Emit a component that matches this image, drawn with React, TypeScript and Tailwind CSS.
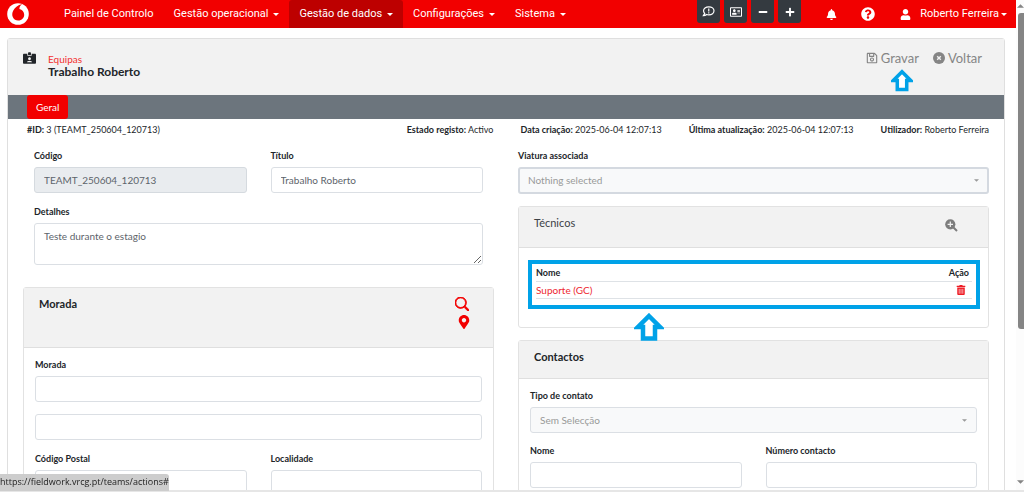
import type { ReactNode } from 'react'
import {
  FaBell,
  FaIdCardAlt,
  FaMapMarkerAlt,
  FaMinus,
  FaPlus,
  FaQuestionCircle,
  FaRegAddressCard,
  FaRegSave,
  FaTrashAlt,
  FaUser,
} from 'react-icons/fa'
import { BsSearch } from 'react-icons/bs'

const fieldClass =
  'block w-full h-[26px] rounded-[3px] border border-[#dbdfe4] bg-white px-[9px] text-[10px] text-[#5d646b]'

const menu = [
  { label: 'Painel de Controlo', dropdown: false, active: false },
  { label: 'Gestão operacional', dropdown: true, active: false },
  { label: 'Gestão de dados', dropdown: true, active: true },
  { label: 'Configurações', dropdown: true, active: false },
  { label: 'Sistema', dropdown: true, active: false },
]

const record = [
  { label: 'Estado registo:', value: 'Activo' },
  { label: 'Data criação:', value: '2025-06-04 12:07:13' },
  { label: 'Última atualização:', value: '2025-06-04 12:07:13' },
  { label: 'Utilizador:', value: 'Roberto Ferreira' },
]

function Logo() {
  return (
    <svg viewBox="0 0 22 22" className="h-[22px] w-[22px]">
      <circle cx="11" cy="11" r="10.8" fill="#fff" />
      <path
        d="M14.6 1.2C11.2 1.7 8 4.5 6.3 7.5C5 9.8 4.9 12.3 5.9 14.3C7 16.6 9 17.6 11.4 17.5C14.7 17.4 17.2 14.9 17.2 11.7C17.2 8.7 15.2 6.8 12.4 6C12.4 4.1 13.3 2.3 14.9 1.5Z"
        fill="#f20000"
      />
    </svg>
  )
}

function CommentIcon() {
  return (
    <svg viewBox="0 0 14 12" className="h-[11px] w-[13px]" fill="none" stroke="currentColor" strokeWidth="1.3">
      <path d="M7.3 1C3.9 1 1.6 2.9 1.6 5.3C1.6 6.4 2.1 7.4 2.9 8.1L1.4 10.5C2.9 10.5 4.1 10 4.9 9.3C5.6 9.5 6.4 9.7 7.3 9.7C10.7 9.7 13 7.7 13 5.3C13 2.9 10.7 1 7.3 1Z" />
      <path d="M7.3 2.8V5.9M7.3 6.8V8.1" />
    </svg>
  )
}

function ZoomInIcon() {
  return (
    <svg viewBox="0 0 13 13" className="h-[13px] w-[13px]" fill="none">
      <path d="M8.5 8.5L12 12" stroke="currentColor" strokeWidth="2" />
      <circle cx="5.3" cy="5.3" r="5.1" fill="currentColor" />
      <path d="M5.3 2.6V8M2.6 5.3H8" stroke="#f2f2f2" strokeWidth="1.2" />
    </svg>
  )
}

function CloseIcon() {
  return (
    <svg viewBox="0 0 12 12" className="h-3 w-3" fill="none">
      <circle cx="6" cy="6" r="6" fill="currentColor" />
      <path d="M4.2 4.2L7.8 7.8M7.8 4.2L4.2 7.8" stroke="#f2f2f2" strokeWidth="1.4" />
    </svg>
  )
}

function Caret({ className }: { className: string }) {
  return (
    <svg viewBox="0 0 6 3" className={className} fill="currentColor">
      <path d="M0 0H6L3 3Z" />
    </svg>
  )
}

function ArrowUp({ className }: { className: string }) {
  return (
    <svg viewBox="0 0 28 28" className={className} fill="#fff" stroke="#00a2e8" strokeWidth="4.5">
      <path d="M14 3L25 14H20V25.5H8V14H3Z" />
    </svg>
  )
}

function ToolButton({ label, children }: { label: string; children: ReactNode }) {
  return (
    <button
      aria-label={label}
      className="flex h-[23px] w-[23px] items-center justify-center rounded-b-[3px] bg-[#343a40] text-[12px] text-white"
    >
      {children}
    </button>
  )
}

function Field({ id, label, children }: { id: string; label: string; children: ReactNode }) {
  return (
    <div>
      <label htmlFor={id} className="mb-[2px] block text-[9px] leading-[18px] font-bold text-[#212529]">
        {label}
      </label>
      {children}
    </div>
  )
}

function SelectBox({ id, text, strong }: { id: string; text: string; strong?: boolean }) {
  return (
    <div className="relative">
      <select
        id={id}
        className={
          strong
            ? 'block h-[27px] w-full appearance-none rounded-[3px] border-2 border-[#d4d9e0] bg-[#f8f9fa] px-2 text-[10px] text-[#999]'
            : 'block h-[26px] w-full appearance-none rounded-[3px] border border-[#dbdfe4] bg-[#f8f9fa] px-[9px] text-[10px] text-[#999]'
        }
      >
        <option>{text}</option>
      </select>
      <Caret className="pointer-events-none absolute top-3 right-[10px] h-[3px] w-[5px] text-[#999]" />
    </div>
  )
}

function Navbar() {
  return (
    <header className="flex h-7 shrink-0 items-center bg-[#f20000] pr-[9px] pl-[7px] font-['Roboto',sans-serif] text-[11px] text-white">
      <a href="#" aria-label="Início">
        <Logo />
      </a>
      <nav className="ml-[25px] flex h-full flex-1">
        {menu.map((item) => (
          <a
            key={item.label}
            href="#"
            className={
              item.active
                ? 'flex items-center gap-[5px] rounded-t-[3px] bg-[#bd0000] px-[10px] whitespace-nowrap'
                : 'flex items-center gap-[5px] px-[10px] whitespace-nowrap'
            }
          >
            {item.label}
            {item.dropdown && <Caret className="h-[3px] w-[6px]" />}
          </a>
        ))}
      </nav>
      <div className="flex h-full items-start gap-1">
        <ToolButton label="Mensagens">
          <CommentIcon />
        </ToolButton>
        <ToolButton label="Cartão">
          <FaRegAddressCard />
        </ToolButton>
        <ToolButton label="Diminuir">
          <FaMinus className="text-[10px]" />
        </ToolButton>
        <ToolButton label="Aumentar">
          <FaPlus className="text-[10px]" />
        </ToolButton>
      </div>
      <button aria-label="Notificações" className="ml-[25px]">
        <FaBell className="h-[11px] w-[11px]" />
      </button>
      <button aria-label="Ajuda" className="ml-6">
        <FaQuestionCircle className="h-[14px] w-[14px]" />
      </button>
      <button className="ml-[25px] flex items-center whitespace-nowrap">
        <FaUser className="mr-[9px] h-[11px] w-[11px]" />
        Roberto Ferreira
        <Caret className="ml-[2px] h-[3px] w-[6px]" />
      </button>
    </header>
  )
}

function AddressCard() {
  return (
    <section className="mt-[22px] rounded-[3px] border border-[#e2e2e2]">
      <div className="flex h-[60px] justify-between border-b border-[#dfdfdf] bg-[#f2f2f2] pr-[22px] pl-[15px]">
        <h2 className="pt-2 text-[11px] leading-4 font-bold">Morada</h2>
        <div className="flex flex-col items-end gap-1 pt-[9px] text-[#f20000]">
          <button aria-label="Pesquisar morada" className="mr-[2px]">
            <BsSearch className="h-[14px] w-[14px]" strokeWidth="1" />
          </button>
          <button aria-label="Ver no mapa">
            <FaMapMarkerAlt className="h-[14px] w-[14px]" />
          </button>
        </div>
      </div>
      <div className="px-[11px] pt-2 pb-6">
        <Field id="morada" label="Morada">
          <input id="morada" className={fieldClass} />
        </Field>
        <input aria-label="Morada (linha 2)" className={`${fieldClass} mt-3`} />
        <div className="mt-[10px] grid grid-cols-2 gap-6">
          <Field id="postal" label="Código Postal">
            <input id="postal" className={fieldClass} />
          </Field>
          <Field id="localidade" label="Localidade">
            <input id="localidade" className={fieldClass} />
          </Field>
        </div>
      </div>
    </section>
  )
}

function TechniciansCard() {
  return (
    <section className="mt-3 rounded-[3px] border border-[#e2e2e2]">
      <div className="flex h-[41px] items-start justify-between border-b border-[#dfdfdf] bg-[#f2f2f2] pr-[30px] pl-[15px]">
        <h2 className="pt-2 text-[11px] leading-4 text-[#3c4146]">Técnicos</h2>
        <button aria-label="Adicionar técnico" className="pt-3 text-[#7d7d7d]">
          <ZoomInIcon />
        </button>
      </div>
      <div className="relative pt-3 pr-2 pb-[18px] pl-[9px]">
        <div className="border-4 border-[#00a2e8] px-1 pb-[6px]">
          <table className="w-full text-[10px] leading-4">
            <thead>
              <tr className="border-b border-[#dee2e6] text-[9px] leading-[17px] text-[#212529]">
                <th className="text-left font-bold">Nome</th>
                <th className="pr-[3px] text-right font-bold">Ação</th>
              </tr>
            </thead>
            <tbody>
              <tr className="border-b border-[#dee2e6]">
                <td className="text-[#ee2730]">Suporte (GC)</td>
                <td className="pr-[6px] text-[#ee1c25]">
                  <button aria-label="Remover" className="ml-auto block py-[3px]">
                    <FaTrashAlt className="h-[10px] w-[10px]" />
                  </button>
                </td>
              </tr>
            </tbody>
          </table>
        </div>
        <ArrowUp className="absolute top-[65px] left-[115px] h-7 w-[30px]" />
      </div>
    </section>
  )
}

function ContactsCard() {
  return (
    <section className="mt-3 rounded-[3px] border border-[#e2e2e2]">
      <h2 className="h-[38px] border-b border-[#dfdfdf] bg-[#f2f2f2] pt-2 pl-[15px] text-[11px] leading-4 font-bold">
        Contactos
      </h2>
      <div className="px-[11px] pt-2 pb-6">
        <Field id="tipo" label="Tipo de contato">
          <SelectBox id="tipo" text="Sem Selecção" />
        </Field>
        <div className="mt-[9px] grid grid-cols-2 gap-6">
          <Field id="nome" label="Nome">
            <input id="nome" className={fieldClass} />
          </Field>
          <Field id="numero" label="Número contacto">
            <input id="numero" className={fieldClass} />
          </Field>
        </div>
      </div>
    </section>
  )
}

function TeamForm() {
  return (
    <main className="mt-[10px] mr-[11px] ml-[7px] rounded-[3px] border border-[#dfdfdf]">
      <div className="flex h-14 justify-between bg-[#f2f2f2] pr-[22px] pl-[15px]">
        <div className="flex gap-3 pt-[13px]">
          <FaIdCardAlt className="h-3 w-[13px]" />
          <div>
            <a href="#" className="block text-[10px] leading-[14px] text-[#f23030]">
              Equipas
            </a>
            <h1 className="text-[12px] leading-3 font-bold">Trabalho Roberto</h1>
          </div>
        </div>
        <div className="relative flex items-start gap-[14px] pt-[10px] text-[13px] leading-[18px] text-[#858585]">
          <button className="flex items-center gap-[3px]">
            <FaRegSave className="h-3 w-3" />
            Gravar
          </button>
          <button className="flex items-center gap-[3px]">
            <CloseIcon />
            Voltar
          </button>
          <ArrowUp className="absolute top-[30px] left-[25px] h-[23px] w-[22px]" />
        </div>
      </div>
      <div className="h-6 bg-[#6c757d] pl-[19px]">
        <button className="block h-6 rounded-[3px] bg-[#f20000] px-[9px] text-[10px] text-white">Geral</button>
      </div>
      <div className="flex justify-between pt-[3px] pr-[15px] pl-[19px] text-[9px] leading-4 whitespace-nowrap">
        <p>
          <b>#ID:</b> 3 (TEAMT_250604_120713)
        </p>
        <div className="flex gap-[27px]">
          {record.map((item) => (
            <p key={item.label}>
              <b>{item.label}</b> {item.value}
            </p>
          ))}
        </div>
      </div>
      <div className="grid grid-cols-2 gap-6 px-[15px] pt-[9px] pb-6">
        <div>
          <div className="px-[11px]">
            <div className="grid grid-cols-2 gap-6">
              <Field id="codigo" label="Código">
                <input
                  id="codigo"
                  readOnly
                  defaultValue="TEAMT_250604_120713"
                  className="block h-[26px] w-full rounded-[3px] border border-[#d5dadf] bg-[#e9ecef] px-[9px] text-[10px] text-[#5d646b]"
                />
              </Field>
              <Field id="titulo" label="Título">
                <input id="titulo" defaultValue="Trabalho Roberto" className={fieldClass} />
              </Field>
            </div>
            <div className="mt-[10px]">
              <Field id="detalhes" label="Detalhes">
                <textarea
                  id="detalhes"
                  defaultValue="Teste durante o estagio"
                  className="block h-[42px] w-full rounded-[3px] border border-[#dbdfe4] px-[9px] py-1 text-[10px] leading-4 text-[#5d646b]"
                />
              </Field>
            </div>
          </div>
          <AddressCard />
        </div>
        <div>
          <Field id="viatura" label="Viatura associada">
            <SelectBox id="viatura" text="Nothing selected" strong />
          </Field>
          <TechniciansCard />
          <ContactsCard />
        </div>
      </div>
    </main>
  )
}

function ScrollTrack() {
  return (
    <div aria-hidden="true" className="flex w-2 shrink-0 flex-col items-end bg-[#fcfcfc] pt-1 pb-[6px] text-[#858585]">
      <Caret className="h-1 w-[7px] rotate-180" />
      <div className="mt-[5px] h-[316px] w-[6px] rounded-l-[3px] bg-[#858585]" />
      <Caret className="mt-auto h-1 w-[7px]" />
    </div>
  )
}

export default function App() {
  return (
    <div className="flex h-screen flex-col overflow-hidden bg-white font-['Lato','Open_Sans',sans-serif] text-[#212529]">
      <div className="flex min-h-0 flex-1">
        <div className="min-w-0 flex-1 overflow-hidden">
          <Navbar />
          <TeamForm />
        </div>
        <ScrollTrack />
      </div>
      <div className="h-[2px] shrink-0 bg-[#e6e6e6]" />
      <div className="fixed bottom-[1px] left-0 h-[17px] rounded-tr-[3px] bg-[#cdcdcd] font-['Open_Sans',sans-serif] text-[9px] leading-4 text-[#222]">
        https://fieldwork.vrcg.pt/teams/actions#
      </div>
    </div>
  )
}
